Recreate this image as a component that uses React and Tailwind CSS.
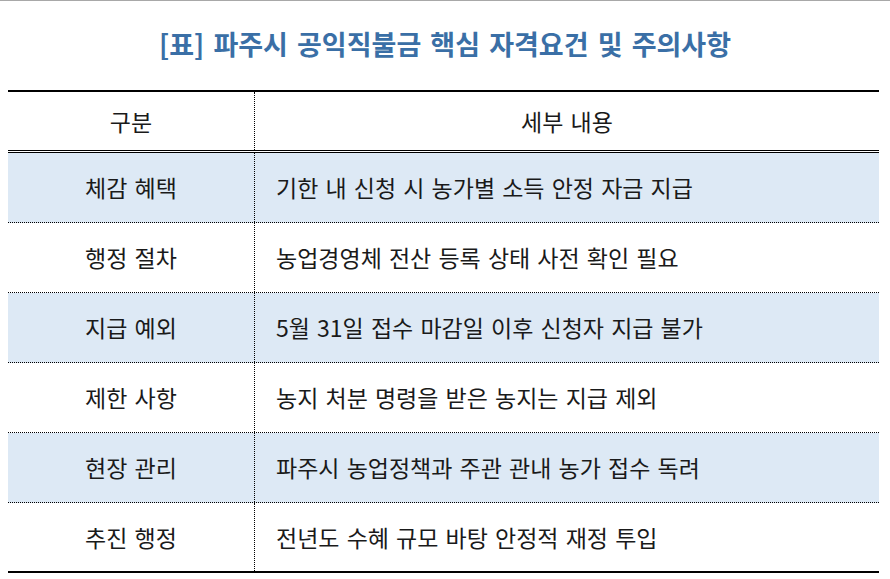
const rows = [
  ['체감 혜택', '기한 내 신청 시 농가별 소득 안정 자금 지급'],
  ['행정 절차', '농업경영체 전산 등록 상태 사전 확인 필요'],
  ['지급 예외', '5월 31일 접수 마감일 이후 신청자 지급 불가'],
  ['제한 사항', '농지 처분 명령을 받은 농지는 지급 제외'],
  ['현장 관리', '파주시 농업정책과 주관 관내 농가 접수 독려'],
  ['추진 행정', '전년도 수혜 규모 바탕 안정적 재정 투입'],
]

export default function App() {
  return (
    <div
      className="w-[890px] h-[579px] bg-white border-t border-[#a8a8a8] overflow-hidden"
      style={{ fontFamily: '"Noto Sans CJK KR", "Noto Sans", sans-serif' }}
    >
      <div className="h-[89px] flex items-center justify-center pb-[2px]">
        <h1 className="text-[27px] font-bold text-[#3a6fa6] [word-spacing:3px]">
          [표] 파주시 공익직불금 핵심 자격요건 및 주의사항
        </h1>
      </div>

      <div className="ml-2 mr-[11px] border-t-2 border-b-2 border-black text-[#1a1a1a] text-[23px] [word-spacing:2px]">
        <div className="flex h-[61px] border-b-[3px] border-double border-black">
          <div className="w-[247px] flex items-center justify-center border-r border-dotted border-black">구분</div>
          <div className="flex-1 flex items-center justify-center">세부 내용</div>
        </div>
        {rows.map(([k, v], i) => (
          <div
            key={k}
            className={
              'flex ' +
              (i % 2 === 0 ? 'bg-[#dde9f5] ' : 'bg-white ') +
              (i < rows.length - 1 ? 'h-[70px] border-b border-dotted border-black' : 'h-[68px]')
            }
          >
            <div className="w-[247px] flex items-center justify-center border-r border-dotted border-black">{k}</div>
            <div className="flex-1 flex items-center pl-[21px]">{v}</div>
          </div>
        ))}
      </div>
    </div>
  )
}
